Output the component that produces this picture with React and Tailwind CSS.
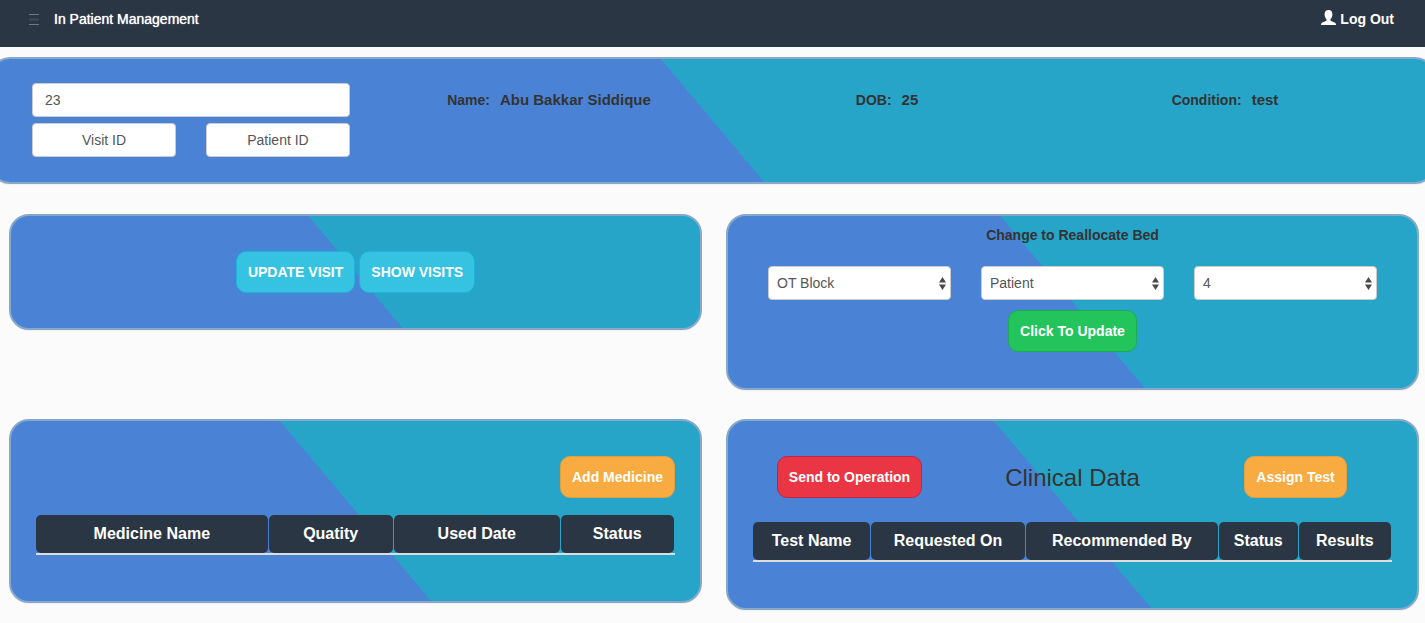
const SPLIT = "bg-[linear-gradient(50deg,#4a83d5_50%,#26a5c9_50%)]";

function Panel({ className = "", children }) {
  return (
    <section className={`rounded-[20px] border-2 border-[#86a9ca] bg-origin-border shadow-[0_1px_1px_rgba(0,0,0,0.05)] ${SPLIT} ${className}`}>
      {children}
    </section>
  );
}

const TONES = {
  cyan: "bg-[#35c3e1] border-[#1cb2dc]",
  green: "bg-[#23c45c] border-[#1bab55]",
  red: "bg-[#ea3644] border-[#b92650]",
  orange: "bg-[#f8ab40] border-[#e0a03f]",
};

function Button({ tone, children }) {
  return (
    <button type="button" className={`h-[42px] rounded-[10px] border px-[11px] text-sm font-bold whitespace-nowrap text-white ${TONES[tone]}`}>
      {children}
    </button>
  );
}

function SelectBox({ label, options }) {
  return (
    <div className="relative flex-1">
      <select aria-label={label} className="h-[34px] w-full appearance-none rounded border border-[#ccc] bg-white pr-6 pl-2 text-sm text-[#555]">
        {options.map((o) => (
          <option key={o}>{o}</option>
        ))}
      </select>
      <svg viewBox="0 0 7 13" className="pointer-events-none absolute top-[11px] right-[5px] h-[13px] w-[7px] fill-[#4a4a4a]" aria-hidden="true">
        <path d="M3.5 0 7 5.400H0zM3.500 13 0 7.600h7z" />
      </svg>
    </div>
  );
}

function Field({ label, value }) {
  return (
    <p className="flex items-baseline justify-center gap-[10px] pt-[7px] text-sm leading-5 font-bold whitespace-nowrap text-[#333]">
      <span>{label}</span>
      <span className="text-[15px]">{value}</span>
    </p>
  );
}

function HeadTable({ label, columns }) {
  return (
    <table aria-label={label} className="w-full table-fixed border-collapse">
      <thead>
        <tr className="border-b-2 border-[#ddd]">
          {columns.map(([name, width]) => (
            <th key={name} scope="col" className={`p-0 ${width}`}>
              <div className="mr-px h-[38px] rounded-[5px] bg-[#2b3644] text-base leading-[37px] font-bold whitespace-nowrap text-white">
                {name}
              </div>
            </th>
          ))}
        </tr>
      </thead>
    </table>
  );
}

const MEDICINE = [
  ["Medicine Name", "w-[36.4%]"],
  ["Quatity", "w-[19.6%]"],
  ["Used Date", "w-[26.1%]"],
  ["Status", "w-[17.9%]"],
];

const TESTS = [
  ["Test Name", "w-[18.5%]"],
  ["Requested On", "w-[24.2%]"],
  ["Recommended By", "w-[30.2%]"],
  ["Status", "w-[12.5%]"],
  ["Results", "w-[14.6%]"],
];

export default function App() {
  return (
    <div className="min-h-screen overflow-x-hidden bg-[#fbfbfb] pb-3 font-['Liberation_Sans',Arial,sans-serif] text-sm text-[#333]">
      <header className="flex h-[47px] items-start justify-between bg-[#2b3644] pt-[9px] pr-[31px] pl-[29px] leading-5 text-white">
        <div className="flex items-center gap-[15px]">
          <button type="button" aria-label="Toggle menu">
            <svg viewBox="0 0 10 11" className="block h-[11px] w-[10px]" aria-hidden="true">
              <path d="M0 .5h10M0 10.5h10" stroke="#6f7985" />
              <path d="M0 5.500h10" stroke="#3f4a59" strokeWidth="2" />
            </svg>
          </button>
          <h1 className="[text-shadow:0_0_1px_#fff]">In Patient Management</h1>
        </div>
        <a href="#logout" className="flex items-center gap-1 font-bold">
          <svg viewBox="0 0 15 15" className="mb-1 size-[15px] fill-white" aria-hidden="true">
            <path d="M7.5 0C10 0 11.400 1.600 11.400 4.200c0 1.900-.7 3.800-1.900 4.900v1.100c0 .4.200.7.600.9l3.400 1.300c1 .4 1.500 1.100 1.500 2.600H0c0-1.500.5-2.200 1.500-2.600l3.400-1.300c.4-.2.6-.5.6-.9V9.100C4.300 8 3.600 6.100 3.600 4.200 3.600 1.600 5 0 7.500 0z" />
          </svg>
          Log Out
        </a>
      </header>

      <main>
        <div className="-mx-[10px] mt-[10px]">
          <Panel className="grid grid-cols-[348fr_338fr_338fr_338fr] pt-6 pr-[39px] pb-[25px] pl-10">
            <form className="mr-[30px] grid grid-cols-2 gap-x-[30px] gap-y-[6px]">
              <input aria-label="Search ID" defaultValue="23" className="col-span-2 h-[34px] min-w-0 rounded border border-[#ccc] bg-white px-3 text-sm text-[#555]" />
              <button type="button" className="h-[34px] rounded border border-[#ccc] bg-white text-[#555]">Visit ID</button>
              <button type="button" className="h-[34px] rounded border border-[#ccc] bg-white text-[#555]">Patient ID</button>
            </form>
            <Field label="Name:" value="Abu Bakkar Siddique" />
            <Field label="DOB:" value="25" />
            <Field label="Condition:" value="test" />
          </Panel>
        </div>

        <div className="mt-[30px] grid grid-cols-2 items-start gap-x-6 gap-y-[29px] pr-[6px] pl-[9px]">
          <Panel className="flex justify-center gap-1 py-[35px]">
            <Button tone="cyan">UPDATE VISIT</Button>
            <Button tone="cyan">SHOW VISITS</Button>
          </Panel>

          <Panel className="px-10 pt-[9px] pb-9 text-center">
            <h2 className="leading-5 font-bold">Change to Reallocate Bed</h2>
            <div className="mt-[21px] mb-[10px] flex gap-[30px]">
              <SelectBox label="Block" options={["OT Block"]} />
              <SelectBox label="Bed type" options={["Patient"]} />
              <SelectBox label="Bed number" options={["4"]} />
            </div>
            <Button tone="green">Click To Update</Button>
          </Panel>

          <Panel className="px-[25px] pt-[35px] pb-[46px]">
            <div className="mb-[17px] flex justify-end">
              <Button tone="orange">Add Medicine</Button>
            </div>
            <HeadTable label="Medicines" columns={MEDICINE} />
          </Panel>

          <Panel className="px-[10px] pt-[35px] pb-[46px]">
            <div className="mb-6 grid grid-cols-3 items-center justify-items-center">
              <Button tone="red">Send to Operation</Button>
              <h2 className="pt-[2px] text-2xl leading-8">Clinical Data</h2>
              <Button tone="orange">Assign Test</Button>
            </div>
            <div className="px-[15px]">
              <HeadTable label="Clinical tests" columns={TESTS} />
            </div>
          </Panel>
        </div>
      </main>
    </div>
  );
}
